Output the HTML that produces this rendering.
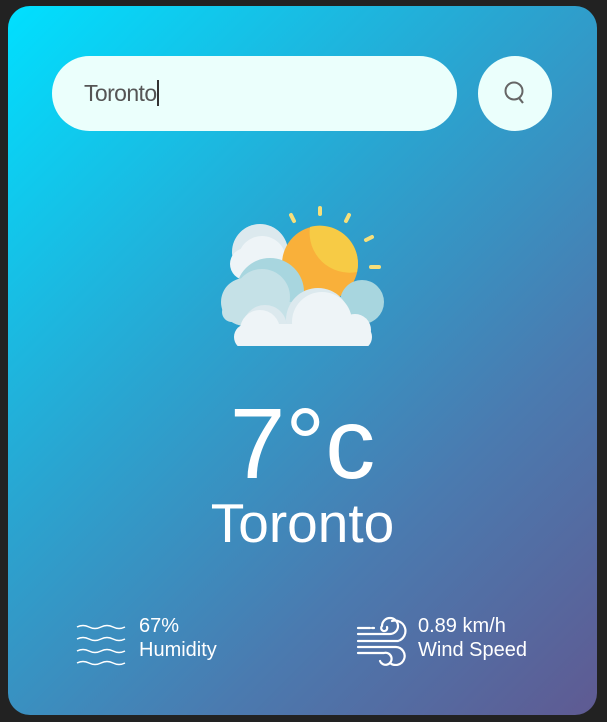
<!DOCTYPE html>
<html><head><style>
body{margin:0;width:607px;height:722px;background:#222;font-family:"Liberation Sans",Arial,sans-serif;overflow:hidden}
.card{position:absolute;left:8px;top:6px;width:589px;height:709px;border-radius:22px;background:linear-gradient(135deg,#00e0ff 0%,#2aa4d0 40%,#4a7bb0 70%,#5f5a92 100%)}
.inp{position:absolute;left:44px;top:50px;width:405px;height:75px;border-radius:38px;background:#ebfffc;font-size:23px;letter-spacing:-0.6px;color:#555;line-height:75px;box-sizing:border-box;padding-left:32px}
.inp span{border-right:2px solid #333;padding-right:0}
.btn{position:absolute;left:470px;top:50px;width:74px;height:75px;border-radius:50%;background:#ebfffc}
.t{position:absolute;width:100%;text-align:center;color:#fff}
.info{position:absolute;color:#fff;font-size:20px;line-height:24px}
</style></head><body>
<div class="card">
<div class="inp"><span>Toronto</span></div>
<div class="btn"><svg width="74" height="75" viewBox="0 0 74 75"><circle cx="36" cy="35" r="8.5" fill="none" stroke="#666" stroke-width="2"/><line x1="41" y1="42" x2="45" y2="47" stroke="#666" stroke-width="2.2"/></svg></div>
<svg style="position:absolute;left:198px;top:190px" width="180" height="150" viewBox="206 194 180 150">
<g stroke="#f6df7a" stroke-width="4" stroke-linecap="round">
<line x1="320" y1="206" x2="320" y2="212"/><line x1="291" y1="213" x2="294" y2="219"/><line x1="349" y1="213" x2="346" y2="219"/><line x1="366" y1="238" x2="372" y2="235"/><line x1="371" y1="265" x2="379" y2="265"/></g>
<circle cx="260" cy="250" r="28" fill="#dce9ee"/><circle cx="246" cy="262" r="16" fill="#eef4f7"/><circle cx="262" cy="258" r="24" fill="#eef4f7"/>
<circle cx="320" cy="262" r="38" fill="#f9b03a"/><path d="M310 225 A38 38 0 0 1 357 270 A40 40 0 0 1 310 225Z" fill="#f7cb45"/>
<circle cx="362" cy="300" r="22" fill="#a8d6df"/>
<circle cx="270" cy="290" r="34" fill="#a8d6df"/><circle cx="245" cy="300" r="24" fill="#c5e1e7"/><circle cx="262" cy="295" r="28" fill="#c5e1e7"/>
<rect x="222" y="300" width="90" height="20" rx="10" fill="#c5e1e7"/>
<circle cx="318" cy="318" r="32" fill="#dce9ee"/><circle cx="322" cy="320" r="30" fill="#eef4f7"/>
<circle cx="265" cy="325" r="22" fill="#dce9ee"/><circle cx="260" cy="328" r="20" fill="#eef4f7"/>
<circle cx="355" cy="328" r="16" fill="#eef4f7"/>
<rect x="234" y="322" width="138" height="26" rx="13" fill="#eef4f7"/>
</svg>
<div class="t" style="top:386px;font-size:100px;line-height:104px">7°c</div>
<div class="t" style="top:488px;font-size:55px;line-height:58px">Toronto</div>
<svg style="position:absolute;left:68px;top:612px" width="52" height="50" viewBox="0 0 52 50"><g fill="none" stroke="#fff" stroke-width="1.5">
<path d="M1 9q6-3 12 0t12 0t12 0t12 0"/><path d="M1 21q6-3 12 0t12 0t12 0t12 0"/><path d="M1 33q6-3 12 0t12 0t12 0t12 0"/><path d="M1 45q6-3 12 0t12 0t12 0t12 0"/></g></svg>
<div class="info" style="left:131px;top:608px">67%<br>Humidity</div>
<svg style="position:absolute;left:348px;top:608px" width="52" height="52" viewBox="0 0 52 52"><g fill="none" stroke="#fff" stroke-width="2.2" stroke-linecap="round">
<path d="M2 14h12"/><path d="M2 20h32a8 8 0 1 0-8-8 3 3 0 1 0 5 1"/><path d="M2 27h40a9 9 0 1 0-6-20"/><path d="M2 33h38a9 9 0 1 1-6 16"/><path d="M2 39h26a6 6 0 1 1-4 8"/><path d="M16 14h2"/></g></svg>
<div class="info" style="left:410px;top:608px">0.89 km/h<br>Wind Speed</div>
</div>
</body></html>
